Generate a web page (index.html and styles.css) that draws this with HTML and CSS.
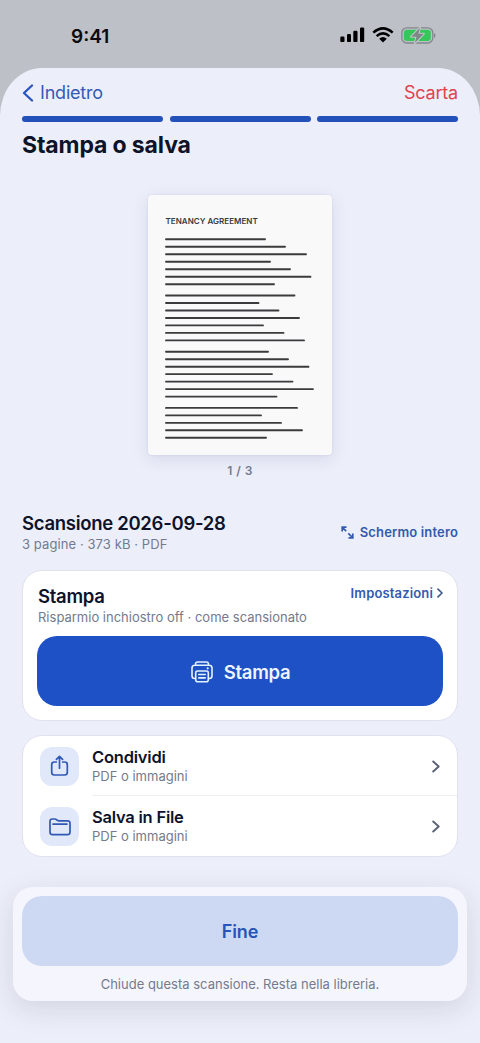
FILE: index.html
```html
<!DOCTYPE html>
<html lang="it">
<head>
<meta charset="utf-8">
<meta name="viewport" content="width=device-width">
<title>Stampa o salva</title>
<link rel="stylesheet" href="styles.css">
</head>
<body>
<div class="screen">
  <div class="status">
    <span class="time">9:41</span>
    <div class="status-icons">
      <svg width="25" height="16" viewBox="0 0 25 16"><rect x="0.3" y="9.5" width="4.2" height="5.6" rx="1.2"/><rect x="7" y="7" width="4" height="8.1" rx="1.2"/><rect x="13.3" y="3.7" width="4.2" height="11.4" rx="1.2"/><rect x="20" y="0.4" width="4.2" height="14.7" rx="1.2"/></svg>
      <svg class="wifi" width="22" height="16" viewBox="0 0 22 16"><g fill="none" stroke="#000" stroke-width="2.5"><path d="M1.3 5.6Q11-2.8 20.7 5.6"/><path d="M4.6 9.1Q11 3.6 17.4 9.1"/></g><path d="M7.2 11.7Q11 8.4 14.8 11.7L11 15.4Z"/></svg>
      <svg class="battery" width="35" height="17" viewBox="0 0 35 17"><rect x="0.8" y="0.8" width="31" height="15.2" rx="5" fill="none" stroke="#83878c" stroke-width="1.3"/><rect x="2.8" y="2.8" width="27" height="11.2" rx="3.2" fill="#35c759"/><path d="M33 6v5q1.5-.7 1.500-2.500T33 6Z" fill="#83878c"/><path d="M19 .8 10.200 9.700h5.300L13.800 16l9-9.200h-5.400Z" fill="#7d8886" stroke="#c0c8c8" stroke-width="2" stroke-linejoin="round" paint-order="stroke"/></svg>
    </div>
  </div>
  <main class="sheet">
    <header class="nav">
      <a class="back"><svg width="12" height="18" viewBox="0 0 12 18"><path d="M10 1.500 2 9l8 7.500"/></svg><span>Indietro</span></a>
      <a class="discard">Scarta</a>
    </header>
    <div class="steps"><i></i><i></i><i></i></div>
    <h1>Stampa o salva</h1>
    <div class="paper">
      <div class="paper-title">TENANCY AGREEMENT</div>
      <svg class="lines" width="150" height="202" viewBox="0 0 150 202"><path d="M1 1.3H100M1 8.8H120M1 16.3H141M1 23.7H105M1 31.2H125M1 38.7H145.500M1 46.200H109M1 57.500H129.500M1 65H93.500M1 72.500H113.500M1 80H134M1 87.400H98M1 94.900H118.500M1 102.400H139M1 113.700H103M1 121.200H123M1 128.700H143.500M1 136.100H107M1 143.600H127.500M1 151.100H148M1 158.600H111.500M1 169.900H132M1 177.400H96M1 184.900H116M1 192.300H137M1 199.800H101"/></svg>
    </div>
    <div class="counter">1 / 3</div>
    <section class="file">
      <div><h2>Scansione 2026-09-28</h2><p class="meta">3 pagine · 373 kB · PDF</p></div>
      <a class="full"><svg width="13" height="13" viewBox="0 0 13 13"><path d="M1.200 5.500V1.200H5.500M1.500 1.500 5.200 5.200M7.300 7.300l4.200 4.200M11.800 7.500v4.300H7.500"/></svg><span>Schermo intero</span></a>
    </section>
    <section class="card print">
      <div class="print-head">
        <h3>Stampa</h3>
        <a class="settings"><span>Impostazioni</span><svg width="6" height="10" viewBox="0 0 6 10"><path d="m1 1.200 4 3.800-4 3.800"/></svg></a>
      </div>
      <p class="print-note">Risparmio inchiostro off · come scansionato</p>
      <button class="print-button">
        <svg width="22" height="22" viewBox="0 0 22 22"><path d="M4.500 4.300V3.200Q4.500 1 6.700 1h8.600q2.200 0 2.200 2.200v1.100M4.700 17.500h-1Q1 17.500 1 14.800V7Q1 4.300 3.700 4.300h14.600Q21 4.300 21 7v7.800q0 2.700-2.700 2.700h-1M6.500 10h9q1.800 0 1.800 1.800v6.900q0 2-2 2H6.700q-2 0-2-2v-6.900Q4.700 10 6.500 10ZM7.800 13.500h6.400M7.800 16.900h6.400"/><circle cx="16.700" cy="7.300" r="1.100"/></svg>
        <span>Stampa</span>
      </button>
    </section>
    <section class="card actions">
      <div class="row">
        <div class="tile"><svg width="19" height="22" viewBox="0 0 19 22"><path d="M6.300 7H4.400Q1.700 7 1.700 9.700v7.600Q1.700 20 4.400 20h10.200q2.700 0 2.700-2.700V9.700q0-2.700-2.700-2.700h-1.900M9.500 13.200V1.300M6.400 4.300l3.100-3 3.100 3"/></svg></div>
        <div class="row-text"><h4>Condividi</h4><p>PDF o immagini</p></div>
        <svg class="chevron" width="8" height="13" viewBox="0 0 8 13"><path d="m1.200 1.500 5.500 5-5.500 5"/></svg>
      </div>
      <div class="row">
        <div class="tile"><svg width="22" height="18" viewBox="0 0 22 18"><path d="M1 14V3.200Q1 1 3.200 1h2.500q1 0 1.800.7l.8.6q.7.500 1.700.500h8.400Q21 2.800 21 5.400V14q0 2.700-2.600 2.700H3.600Q1 16.700 1 14ZM4 6.100h14"/></svg></div>
        <div class="row-text"><h4>Salva in File</h4><p>PDF o immagini</p></div>
        <svg class="chevron" width="8" height="13" viewBox="0 0 8 13"><path d="m1.200 1.500 5.500 5-5.500 5"/></svg>
      </div>
    </section>
    <footer class="dock">
      <button class="done">Fine</button>
      <p>Chiude questa scansione. Resta nella libreria.</p>
    </footer>
  </main>
</div>
</body>
</html>
```

FILE: styles.css
```css
* { box-sizing: border-box; }
body { margin: 0; font-family: Inter, "Liberation Sans", sans-serif; color: #0d1329; background: #bec0c8; }
h1, h2, h3, h4, p { margin: 0; font-weight: 600; white-space: nowrap; }
svg { display: block; flex: none; }
button { border: 0; padding: 0; font-family: inherit; display: flex; align-items: center; justify-content: center; }
a { white-space: nowrap; }
.screen { width: 480px; height: 1043px; overflow: hidden; background: #bec0c8; }
.status { height: 68px; padding: 4px 44px 0 71px; display: flex; align-items: center; justify-content: space-between; }
.time { font-size: 19px; font-weight: 600; letter-spacing: 0; color: #0a0a0c; }
.status-icons { display: flex; align-items: center; margin-bottom: 2px; }
.wifi { margin-left: 7px; }
.battery { margin-left: 7px; }
.sheet { height: 975px; padding: 0 22px; background: #eceff9; border-radius: 42px 42px 0 0 / 48px 48px 0 0; }
.nav { height: 48px; padding-top: 1px; display: flex; align-items: center; justify-content: space-between; font-size: 18px; letter-spacing: -0.2px; }
.back { display: flex; align-items: center; gap: 6px; color: #335bb7; }
.back path { fill: none; stroke: #2754c0; stroke-width: 2.3; stroke-linecap: round; stroke-linejoin: round; }
.discard { color: #e0434f; }
.steps { display: grid; grid-template-columns: repeat(3, 1fr); gap: 6.5px; }
.steps i { height: 6px; border-radius: 3px; background: #2450b9; }
h1 { margin-top: 9px; font-size: 23px; line-height: 28px; font-weight: 700; letter-spacing: -0.13px; }
.paper { width: 184px; height: 260px; margin: 36px 0 0 126px; padding: 20px 17.5px 0; border-radius: 4px; background: #f9f9fa; box-shadow: 0 4px 16px rgba(60, 55, 130, 0.13), 0 0 2px rgba(90, 80, 180, 0.15); }
.paper-title { font-size: 8px; line-height: 13px; font-weight: 600; letter-spacing: 0.03px; color: #3a3a3d; white-space: nowrap; }
.lines { margin-top: 10px; margin-left: -0.5px; }
.lines path { fill: none; stroke: #3b3b3d; stroke-width: 1.9; stroke-linecap: round; }
.counter { margin-top: 8px; text-align: center; font-size: 12px; line-height: 16px; font-weight: 600; letter-spacing: 0.45px; color: #747a93; }
.file { margin-top: 33px; height: 41px; display: flex; justify-content: space-between; }
h2 { font-size: 18.5px; line-height: 23px; letter-spacing: -0.29px; }
.meta, .print-note, .row p, .dock p { font-weight: 400; color: #747a8d; font-size: 13px; line-height: 18px; }
.meta { letter-spacing: 0.09px; }
.full, .settings { display: flex; align-items: center; color: #345aaf; font-weight: 600; font-size: 13px; letter-spacing: 0.15px; }
.full { gap: 6px; height: 40px; }
.full path { fill: none; stroke: #345aaf; stroke-width: 1.7; }
.card { background: #fff; border: 1px solid #dfe1ee; border-radius: 20px; }
.print { margin-top: 17px; height: 151px; padding: 14px 14px 0; }
.print-head { display: flex; justify-content: space-between; height: 23px; }
h3 { font-size: 18.5px; line-height: 23px; letter-spacing: -0.3px; padding-left: 1px; }
.settings { height: 15px; gap: 4px; }
.settings path, .chevron path { fill: none; stroke: #42598f; stroke-width: 1.7; stroke-linecap: round; stroke-linejoin: round; }
.print-note { padding-left: 1px; }
.print-button { width: 406px; height: 70px; margin-top: 10px; padding: 1px 0 0 1px; border-radius: 20px; background: #1e51c6; color: #edf3ff; font-size: 18.5px; font-weight: 600; letter-spacing: -0.3px; gap: 11px; }
.print-button path { fill: none; stroke: #e3f2ff; stroke-width: 1.6; stroke-linecap: round; stroke-linejoin: round; }
.print-button circle { fill: #e3f2ff; }
.actions { margin-top: 14px; height: 122px; }
.row { height: 61px; display: flex; align-items: center; padding-left: 16px; }
.row:first-child { height: 60px; }
.tile { width: 39px; height: 39px; margin-left: 1px; border-radius: 12px; background: #e1e8f9; display: flex; align-items: center; justify-content: center; flex: none; }
.tile path { fill: none; stroke: #3158b4; stroke-width: 1.7; stroke-linecap: round; stroke-linejoin: round; }
.row-text { margin-left: 13px; flex: 1; align-self: stretch; padding-top: 11px; }
.row:first-child .row-text { border-bottom: 1px solid #eeeef2; }
h4 { font-size: 16.5px; line-height: 20px; letter-spacing: -0.22px; }
.chevron { margin-left: -25px; margin-right: 17px; }
.chevron path { stroke: #596174; stroke-width: 1.9; }
.dock { width: 454px; height: 114px; margin: 30px 0 0 -9px; padding: 9px; border-radius: 20px; background: #f5f6fd; box-shadow: 0 8px 28px rgba(35, 40, 70, 0.13); }
.done { width: 436px; height: 70px; border-radius: 20px; background: #cdd9f3; color: #2853b8; font-size: 18px; font-weight: 600; letter-spacing: -0.1px; }
.dock p { text-align: center; margin-top: 9px; }
```
